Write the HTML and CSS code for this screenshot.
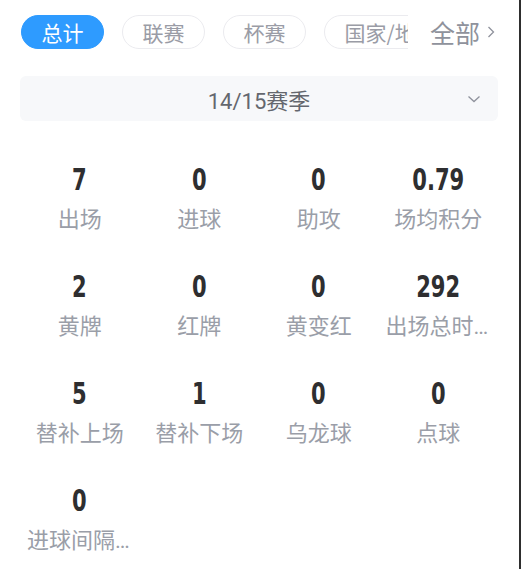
FILE: index.html
```html
<!DOCTYPE html>
<html lang="zh-CN">
<head>
    <meta charset="UTF-8">
    <meta name="viewport" content="width=device-width, initial-scale=1.0">
    <title>球员数据</title>
    <link rel="stylesheet" href="styles.css">
</head>
<body>
    <div class="page">
        <!-- Competition tabs -->
        <div class="tab-bar">
            <div class="tabs">
                <span class="tab active">总计</span>
                <span class="tab">联赛</span>
                <span class="tab">杯赛</span>
                <span class="tab">国家/地区</span>
            </div>
            <div class="more">
                <span>全部</span>
                <svg class="more-arrow" width="8" height="14" viewBox="0 0 8 14">
                    <path d="M1.5 2 L6.5 7 L1.5 12" fill="none" stroke="#8f929c" stroke-width="1.3"/>
                </svg>
            </div>
        </div>

        <!-- Season picker -->
        <div class="season">
            <span class="season-name">14/15赛季</span>
            <svg class="season-arrow" width="14" height="8" viewBox="0 0 14 8">
                <path d="M1.5 1.5 L7 6.5 L12.5 1.5" fill="none" stroke="#8f929c" stroke-width="1.3"/>
            </svg>
        </div>

        <!-- Stats grid -->
        <div class="stats">
            <div class="stat"><span class="value">7</span><div class="label">出场</div></div>
            <div class="stat"><span class="value">0</span><div class="label">进球</div></div>
            <div class="stat"><span class="value">0</span><div class="label">助攻</div></div>
            <div class="stat"><span class="value">0.79</span><div class="label">场均积分</div></div>

            <div class="stat"><span class="value">2</span><div class="label">黄牌</div></div>
            <div class="stat"><span class="value">0</span><div class="label">红牌</div></div>
            <div class="stat"><span class="value">0</span><div class="label">黄变红</div></div>
            <div class="stat"><span class="value">292</span><div class="label">出场总时长</div></div>

            <div class="stat"><span class="value">5</span><div class="label">替补上场</div></div>
            <div class="stat"><span class="value">1</span><div class="label">替补下场</div></div>
            <div class="stat"><span class="value">0</span><div class="label">乌龙球</div></div>
            <div class="stat"><span class="value">0</span><div class="label">点球</div></div>

            <div class="stat"><span class="value">0</span><div class="label">进球间隔时间</div></div>
        </div>
    </div>
</body>
</html>
```

FILE: styles.css
```css
/* Reset */
* {
    margin: 0;
    padding: 0;
    box-sizing: border-box;
}

body {
    font-family: Roboto, "Noto Sans CJK SC", sans-serif;
    background-color: #ffffff;
}

.page {
    width: 521px;
    height: 569px;
    padding: 15px 23px 0 20px;
    border-right: 2px solid #2e2e2e;
    overflow: hidden;
}

/* Tabs */
.tab-bar {
    display: flex;
    align-items: center;
    height: 34px;
}

.tabs {
    display: flex;
    gap: 18px;
    width: 388px;
    flex-shrink: 0;
    overflow: hidden;
    padding-left: 1px;
}

.tab {
    flex-shrink: 0;
    height: 34px;
    padding: 0 19.5px;
    line-height: 32px;
    border: 1px solid #ebebef;
    border-radius: 17px;
    font-family: "Noto Sans CJK SC", sans-serif;
    font-size: 21px;
    color: #9a9ca6;
    white-space: nowrap;
}

.tab.active {
    background-color: #2e9bff;
    border-color: #2e9bff;
    color: #ffffff;
}

.more {
    display: flex;
    align-items: center;
    gap: 7px;
    margin-left: 22px;
    font-family: "Noto Sans CJK SC", sans-serif;
    font-size: 25px;
    color: #8f929c;
    white-space: nowrap;
}

/* Season picker */
.season {
    position: relative;
    margin-top: 27px;
    height: 45px;
    width: 478px;
    background-color: #f7f8fa;
    border-radius: 6px;
    display: flex;
    align-items: center;
    justify-content: center;
}

.season-name {
    font-size: 22px;
    color: #64676e;
}

.season-arrow {
    position: absolute;
    right: 17px;
    top: 19px;
}

/* Stats */
.stats {
    display: grid;
    grid-template-columns: repeat(4, minmax(0, 1fr));
    width: 478px;
    margin-top: 42px;
    row-gap: 33px;
}

.stat {
    min-width: 0;
    text-align: center;
    padding: 0 7px;
}

/* condensed digits, like the app's DIN face */
.value {
    display: inline-block;
    font-family: "DejaVu Sans Condensed", sans-serif;
    font-weight: bold;
    font-size: 30px;
    line-height: 34px;
    color: #2e2e30;
    transform: scaleX(0.78);
}

.label {
    margin-top: 6px;
    font-family: Roboto, "Noto Sans CJK SC", sans-serif;
    font-size: 22px;
    line-height: 34px;
    color: #9a9ea8;
    white-space: nowrap;
    overflow: hidden;
    text-overflow: ellipsis;
}
```
